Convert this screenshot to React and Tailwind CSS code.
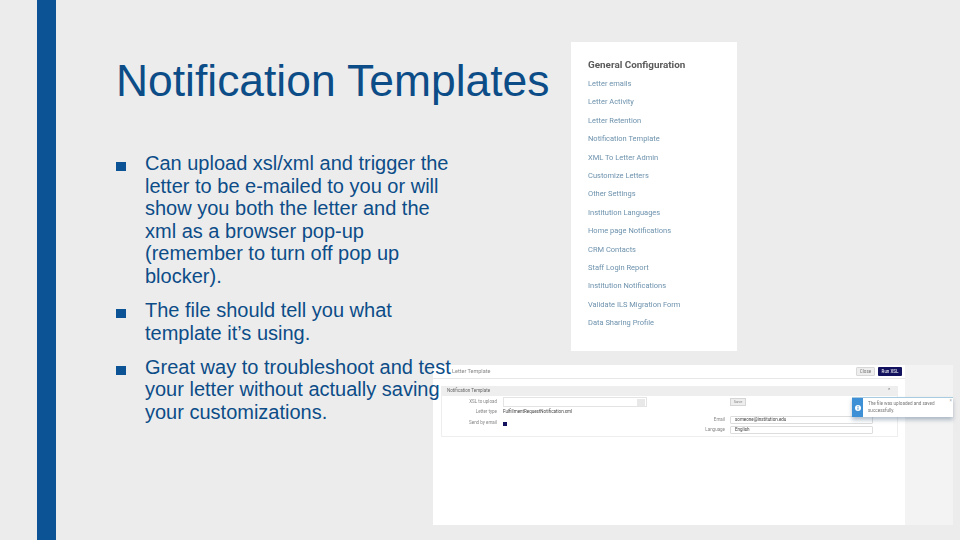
const items = ["Letter emails","Letter Activity","Letter Retention","Notification Template","XML To Letter Admin","Customize Letters","Other Settings","Institution Languages","Home page Notifications","CRM Contacts","Staff Login Report","Institution Notifications","Validate ILS Migration Form","Data Sharing Profile"];
const bullets = [
  ["Can upload xsl/xml and trigger the","letter to be e-mailed to you or will","show you both the letter and the","xml as a browser pop-up","(remember to turn off pop up","blocker)."],
  ["The file should tell you what","template it’s using."],
  ["Great way to troubleshoot and test","your letter without actually saving","your customizations."],
];
export default function App() {
  return (
    <div className="relative flex w-[960px] h-[540px] overflow-hidden bg-[#edecec] font-['Liberation_Sans',sans-serif]">
      <div className="ml-[37px] w-[19px] h-full bg-[#0b5394]" />
      <div className="relative z-10 pl-[60px] text-[#0c4d88]">
        <h1 className="mt-[55px] h-[52px] text-[44.4px] leading-[52px] whitespace-nowrap">Notification Templates</h1>
        <div className="mt-[45px] flex flex-col gap-[11.5px]">
          {bullets.map((lines, i) => (
            <div key={i} className="flex">
              <div className="w-[29px] pt-[10px]"><div className="w-[10px] h-[9px] bg-[#0b5394]" /></div>
              <div className="text-[20px] leading-[22.6px] whitespace-nowrap">
                {lines.map((l) => <div key={l}>{l}</div>)}
              </div>
            </div>
          ))}
        </div>
      </div>

      <div className="absolute left-[571px] top-[42px] w-[166px] h-[309px] bg-white pl-[17px] pt-[16px] font-['Roboto',sans-serif]">
        <div className="blur-[0.4px]">
          <div className="mt-[1px] text-[9.9px] leading-[12px] font-bold text-[#5a5a5a] whitespace-nowrap">General Configuration</div>
          <div className="mt-[4px] flex flex-col">
            {items.map((t) => <div key={t} className="h-[18.4px] text-[7.5px] leading-[18.4px] text-[#6d92ad] whitespace-nowrap">{t}</div>)}
          </div>
        </div>
      </div>

      <div className="absolute left-[433px] top-[365px] w-[520px] h-[160px] flex bg-white font-['Roboto',sans-serif]">
        <div className="w-[472px] blur-[0.35px]">
          <div className="flex items-center justify-between h-[14px] pl-[19px] pr-[3px] border-b border-[#e8e8e8]">
            <span className="text-[5.5px] text-[#888888]">Letter Template</span>
            <div className="flex gap-[3px]">
              <div className="w-[19px] h-[9px] rounded-[1px] bg-[#eeeeee] border border-[#d8d8d8] text-[4.5px] leading-[7px] text-center text-[#777777]">Close</div>
              <div className="w-[24px] h-[9px] rounded-[1px] bg-[#12125e] text-[4.5px] leading-[9px] text-center text-white">Run XSL</div>
            </div>
          </div>
          <div className="ml-[8px] mt-[7px] w-[457px] h-[51px] border-x border-b border-[#eeeeee]">
            <div className="flex items-center justify-between h-[10px] bg-[#eeeeee] pl-[5px] pr-[6px] text-[4.5px] text-[#666666]">
              <span>Notification Template</span>
              <span className="text-[#555555]">⌃</span>
            </div>
            <div className="flex mt-[1px]">
              <div className="w-[258px] flex flex-col text-[4.5px] text-[#888888]">
                <div className="flex items-center h-[10px]">
                  <span className="w-[55px] text-right">XSL to upload</span>
                  <div className="ml-[6px] w-[144px] h-[10px] border border-[#e4e4e4] flex items-center justify-end pr-[1px]"><div className="w-[8px] h-[7px] bg-[#e8e8e8]" /></div>
                </div>
                <div className="flex items-center h-[10px]">
                  <span className="w-[55px] text-right">Letter type</span>
                  <span className="ml-[6px] text-[#444444] whitespace-nowrap">FulfillmentRequestNotification.xml</span>
                </div>
                <div className="flex items-center h-[13px]">
                  <span className="w-[55px] text-right">Send by email</span>
                  <div className="ml-[6px] w-[4px] h-[4px] bg-[#12125e]" />
                </div>
              </div>
              <div className="flex flex-col text-[4.5px] text-[#888888]">
                <div className="h-[19px] pl-[30px] pt-[1px]">
                  <div className="w-[16px] h-[8px] bg-[#eeeeee] border border-[#d5d5d5] text-[4px] leading-[6px] text-center">Save</div>
                </div>
                <div className="flex flex-col gap-[2px]">
                  <div className="flex items-center"><span className="w-[25px] text-right">Email</span><div className="ml-[5px] w-[143px] h-[8px] rounded-[1px] border border-[#dddddd] text-[#444444] leading-[6px] pl-[4px]">someone@institution.edu</div></div>
                  <div className="flex items-center"><span className="w-[25px] text-right">Language</span><div className="ml-[5px] w-[143px] h-[8px] rounded-[1px] border border-[#dddddd] text-[#444444] leading-[6px] pl-[4px]">English</div></div>
                </div>
              </div>
            </div>
          </div>
        </div>
        <div className="flex-1 bg-[#f3f3f3]" />
      </div>

      <div className="absolute z-20 left-[852px] top-[397px] w-[101px] h-[20px] bg-white flex border-t border-[#a9cbe0] shadow-[0_3px_4px_rgba(70,100,130,0.4)] font-['Roboto',sans-serif]">
        <div className="w-[11px] h-full bg-[#3d8fd6] flex items-center justify-center">
          <svg width="6" height="6" viewBox="0 0 6 6"><circle cx="3" cy="3" r="3" fill="#fff" /><rect x="2.5" y="2.5" width="1" height="2.2" fill="#3d8fd6" /><rect x="2.5" y="1.1" width="1" height="0.9" fill="#3d8fd6" /></svg>
        </div>
        <div className="pl-[5px] pt-[3px] text-[4.6px] leading-[6.8px] text-[#777777] blur-[0.3px]">The file was uploaded and saved<br />successfully.</div>
        <span className="absolute right-[1px] top-[0px] text-[4.5px] text-[#aaaaaa]">×</span>
      </div>
    </div>
  );
}
